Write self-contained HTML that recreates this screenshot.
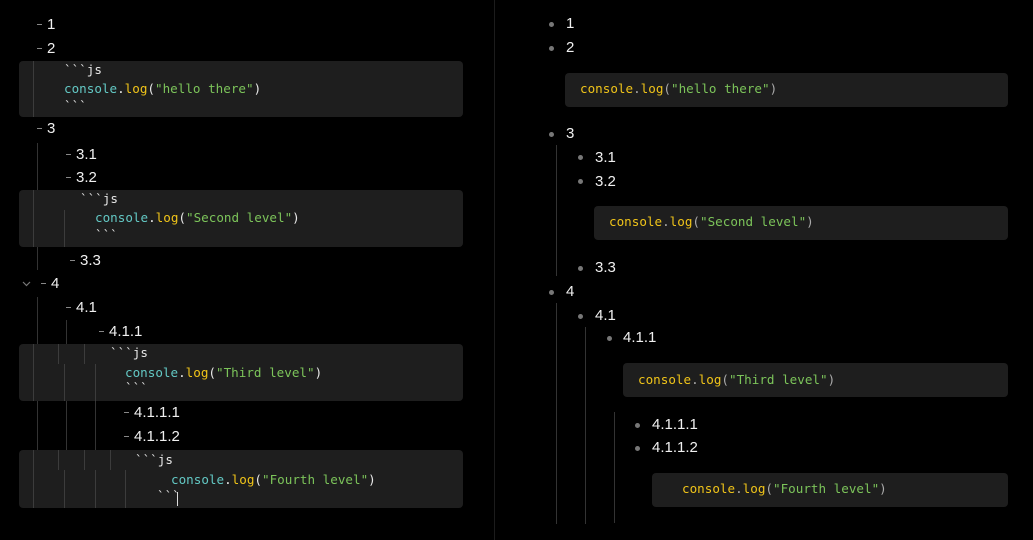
<!DOCTYPE html>
<html><head><meta charset="utf-8"><style>
body{margin:0;width:1033px;height:540px;background:#000;overflow:hidden;position:relative;font-family:"Liberation Sans",sans-serif;color:#eee}
.a{position:absolute;white-space:pre}
.t{font-size:15px;line-height:18px;color:#f0f0f0}
.d{position:absolute;width:5px;height:1px;background:#888;margin-top:-2px}
.b{position:absolute;width:5px;height:5px;border-radius:50%;background:#777}
.m{font-family:"DejaVu Sans Mono",monospace;font-size:12.6px;line-height:16px;color:#e8e8e8}
.cb{position:absolute;background:#1e1e1e;border-radius:4px}
.v{position:absolute;width:1px;background:#333}
.vi{position:absolute;width:1px;background:#3c3c3c}
.c{color:#63c8c4}.l{color:#f0c419}.s{color:#7cc45a}.g{color:#aaa}
.y{color:#f0c419}
</style></head><body>
<div class="v" style="left:494px;top:0;height:540px;background:#1c1c1c"></div>

<div class="d" style="left:37px;top:26px"></div><div class="a t" style="left:47px;top:16px">1</div>
<div class="d" style="left:37px;top:50px"></div><div class="a t" style="left:47px;top:40px">2</div>
<div class="cb" style="left:19px;top:61px;width:444px;height:56px"></div>
<div class="vi" style="left:33px;top:61px;height:56px"></div>
<div class="a m" style="left:64px;top:62px">&#96;&#96;&#96;js</div>
<div class="a m" style="left:64px;top:81px"><span class="c">console</span>.<span class="l">log</span>(<span class="s">"hello there"</span>)</div>
<div class="a m" style="left:64px;top:98px">&#96;&#96;&#96;</div>

<div class="d" style="left:37px;top:130px"></div><div class="a t" style="left:47px;top:120px">3</div>
<div class="v" style="left:37px;top:143px;height:47px"></div>
<div class="d" style="left:66px;top:156px"></div><div class="a t" style="left:76px;top:146px">3.1</div>
<div class="d" style="left:66px;top:179px"></div><div class="a t" style="left:76px;top:169px">3.2</div>
<div class="cb" style="left:19px;top:190px;width:444px;height:57px"></div>
<div class="vi" style="left:33px;top:190px;height:57px"></div>
<div class="vi" style="left:64px;top:210px;height:37px"></div>
<div class="a m" style="left:80px;top:191px">&#96;&#96;&#96;js</div>
<div class="a m" style="left:95px;top:210px"><span class="c">console</span>.<span class="l">log</span>(<span class="s">"Second level"</span>)</div>
<div class="a m" style="left:95px;top:227px">&#96;&#96;&#96;</div>
<div class="v" style="left:37px;top:247px;height:23px"></div>
<div class="d" style="left:70px;top:262px"></div><div class="a t" style="left:80px;top:252px">3.3</div>

<svg class="a" style="left:22px;top:281px" width="9" height="6" viewBox="0 0 9 6"><path d="M1 1l3.5 3.5L8 1" fill="none" stroke="#777" stroke-width="1.2"/></svg>
<div class="d" style="left:41px;top:285px"></div><div class="a t" style="left:51px;top:275px">4</div>
<div class="v" style="left:37px;top:297px;height:47px"></div>
<div class="d" style="left:66px;top:309px"></div><div class="a t" style="left:76px;top:299px">4.1</div>
<div class="v" style="left:66px;top:320px;height:24px"></div>
<div class="d" style="left:99px;top:333px"></div><div class="a t" style="left:109px;top:323px">4.1.1</div>
<div class="cb" style="left:19px;top:344px;width:444px;height:57px"></div>
<div class="vi" style="left:33px;top:344px;height:57px"></div>
<div class="vi" style="left:58px;top:344px;height:20px"></div>
<div class="vi" style="left:84px;top:344px;height:20px"></div>
<div class="vi" style="left:64px;top:364px;height:37px"></div>
<div class="vi" style="left:95px;top:364px;height:37px"></div>
<div class="a m" style="left:110px;top:345px">&#96;&#96;&#96;js</div>
<div class="a m" style="left:125px;top:365px"><span class="c">console</span>.<span class="l">log</span>(<span class="s">"Third level"</span>)</div>
<div class="a m" style="left:125px;top:380px">&#96;&#96;&#96;</div>
<div class="v" style="left:37px;top:401px;height:49px"></div>
<div class="v" style="left:66px;top:401px;height:49px"></div>
<div class="v" style="left:95px;top:401px;height:49px"></div>
<div class="d" style="left:124px;top:414px"></div><div class="a t" style="left:134px;top:404px">4.1.1.1</div>
<div class="d" style="left:124px;top:438px"></div><div class="a t" style="left:134px;top:428px">4.1.1.2</div>
<div class="cb" style="left:19px;top:450px;width:444px;height:58px"></div>
<div class="vi" style="left:33px;top:450px;height:58px"></div>
<div class="vi" style="left:58px;top:450px;height:20px"></div>
<div class="vi" style="left:84px;top:450px;height:20px"></div>
<div class="vi" style="left:110px;top:450px;height:20px"></div>
<div class="vi" style="left:64px;top:470px;height:38px"></div>
<div class="vi" style="left:95px;top:470px;height:38px"></div>
<div class="vi" style="left:125px;top:470px;height:38px"></div>
<div class="a m" style="left:135px;top:452px">&#96;&#96;&#96;js</div>
<div class="a m" style="left:171px;top:472px"><span class="c">console</span>.<span class="l">log</span>(<span class="s">"Fourth level"</span>)</div>
<div class="a m" style="left:157px;top:488px">&#96;&#96;&#96;</div>
<div class="a" style="left:177px;top:492px;width:1px;height:14px;background:#ddd"></div>

<div class="b" style="left:549px;top:22px"></div><div class="a t" style="left:566px;top:15px">1</div>
<div class="b" style="left:549px;top:46px"></div><div class="a t" style="left:566px;top:39px">2</div>
<div class="cb" style="left:565px;top:73px;width:443px;height:34px"></div>
<div class="a m" style="left:580px;top:81px"><span class="y">console</span><span class="g">.</span><span class="y">log</span><span class="g">(</span><span class="s">"hello there"</span><span class="g">)</span></div>

<div class="b" style="left:549px;top:132px"></div><div class="a t" style="left:566px;top:125px">3</div>
<div class="v" style="left:556px;top:145px;height:131px"></div>
<div class="b" style="left:578px;top:155px"></div><div class="a t" style="left:595px;top:149px">3.1</div>
<div class="b" style="left:578px;top:179px"></div><div class="a t" style="left:595px;top:173px">3.2</div>
<div class="cb" style="left:594px;top:206px;width:414px;height:34px"></div>
<div class="a m" style="left:609px;top:214px"><span class="y">console</span><span class="g">.</span><span class="y">log</span><span class="g">(</span><span class="s">"Second level"</span><span class="g">)</span></div>
<div class="b" style="left:578px;top:266px"></div><div class="a t" style="left:595px;top:259px">3.3</div>

<div class="b" style="left:549px;top:290px"></div><div class="a t" style="left:566px;top:283px">4</div>
<div class="v" style="left:556px;top:303px;height:221px"></div>
<div class="b" style="left:578px;top:314px"></div><div class="a t" style="left:595px;top:307px">4.1</div>
<div class="v" style="left:585px;top:327px;height:197px"></div>
<div class="b" style="left:607px;top:336px"></div><div class="a t" style="left:623px;top:329px">4.1.1</div>
<div class="cb" style="left:623px;top:363px;width:385px;height:34px"></div>
<div class="a m" style="left:638px;top:372px"><span class="y">console</span><span class="g">.</span><span class="y">log</span><span class="g">(</span><span class="s">"Third level"</span><span class="g">)</span></div>
<div class="v" style="left:614px;top:412px;height:111px"></div>
<div class="b" style="left:635px;top:423px"></div><div class="a t" style="left:652px;top:416px">4.1.1.1</div>
<div class="b" style="left:635px;top:446px"></div><div class="a t" style="left:652px;top:439px">4.1.1.2</div>
<div class="cb" style="left:652px;top:473px;width:356px;height:34px"></div>
<div class="a m" style="left:682px;top:481px"><span class="y">console</span><span class="g">.</span><span class="y">log</span><span class="g">(</span><span class="s">"Fourth level"</span><span class="g">)</span></div>
</body></html>
